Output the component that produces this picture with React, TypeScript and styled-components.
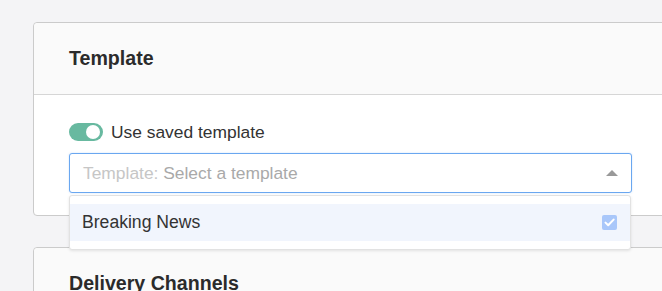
import styled, { createGlobalStyle } from "styled-components";

const GlobalStyle = createGlobalStyle`
  html, body {
    margin: 0;
    padding: 0;
    background: #f4f4f6;
    overflow: hidden;
  }
  body {
    font-family: "Liberation Sans", Arial, sans-serif;
    color: #333;
  }
`;

const Page = styled.main`
  display: flex;
  flex-direction: column;
  gap: 31px;
  padding: 22px 0 0 33px;
  width: 700px;
`;

const Card = styled.section`
  position: relative;
  width: 633px;
  background: #fff;
  border: 1px solid #cbcbcb;
  border-radius: 4px;
`;

const CardHeader = styled.header`
  display: flex;
  align-items: center;
  height: 71px;
  padding: 0 35px;
  background: #fafafa;
  border-bottom: ${({ $divider }: { $divider?: boolean }) =>
    $divider ? "1px solid #d6d6d6" : "none"};
  border-radius: 4px 4px 0 0;
`;

const Title = styled.h2`
  margin: 0;
  font-size: 19.6px;
  font-weight: 700;
  color: #2b2b2b;
`;

const CardBody = styled.div`
  position: relative;
  padding: 25px 35px 22px;
`;

const ToggleRow = styled.label`
  display: flex;
  align-items: center;
  gap: 8px;
  height: 24px;
  font-size: 17.4px;
  color: #333;
`;

const Switch = styled.span`
  position: relative;
  width: 34px;
  height: 18px;
  border-radius: 9px;
  background: #68b9a0;

  &::after {
    content: "";
    position: absolute;
    top: 2px;
    right: 3px;
    width: 14px;
    height: 14px;
    border-radius: 50%;
    background: #fff;
  }
`;

const Select = styled.div`
  display: flex;
  align-items: center;
  justify-content: space-between;
  margin-top: 9px;
  height: 38px;
  padding: 0 13px;
  border: 1px solid #6aa7f0;
  border-radius: 3px;
  background: #fff;
  box-shadow: 0 0 2px rgba(106, 167, 240, 0.35);
  font-size: 17.4px;
`;

const Placeholder = styled.span`
  color: #a9a9a9;

  & > em {
    font-style: normal;
    color: #c6c6c6;
  }
`;

const Caret = styled.span`
  width: 0;
  height: 0;
  border-left: 6px solid transparent;
  border-right: 6px solid transparent;
  border-bottom: 6px solid #999;
`;

const Menu = styled.ul`
  position: absolute;
  z-index: 2;
  left: 35px;
  top: 100px;
  width: 560px;
  margin: 0;
  padding: 8px 0 8px;
  list-style: none;
  background: #fff;
  border: 1px solid #e2e2e2;
  border-radius: 3px;
  box-shadow: 0 1px 3px rgba(0, 0, 0, 0.1);
`;

const Option = styled.li`
  display: flex;
  align-items: center;
  justify-content: space-between;
  height: 37px;
  padding: 0 13px 0 12px;
  font-size: 17.6px;
  color: #333;
  background: ${({ $active }: { $active?: boolean }) =>
    $active ? "#f1f5fd" : "transparent"};
`;

const Check = styled.span`
  display: flex;
  align-items: center;
  justify-content: center;
  width: 15px;
  height: 15px;
  border-radius: 2px;
  background: #a9c7fa;
`;

function App() {
  return (
    <>
      <GlobalStyle />
      <Page>
        <Card>
          <CardHeader $divider>
            <Title>Template</Title>
          </CardHeader>
          <CardBody>
            <ToggleRow>
              <Switch />
              Use saved template
            </ToggleRow>
            <Select>
              <Placeholder>
                <em>Template:</em> Select a template
              </Placeholder>
              <Caret />
            </Select>
            <Menu>
              <Option $active>
                Breaking News
                <Check>
                  <svg width="11" height="9" viewBox="0 0 11 9">
                    <path
                      d="M1.5 4.6l2.7 2.7L9.6 1.6"
                      fill="none"
                      stroke="#fff"
                      strokeWidth="2"
                      strokeLinecap="round"
                      strokeLinejoin="round"
                    />
                  </svg>
                </Check>
              </Option>
            </Menu>
          </CardBody>
        </Card>
        <Card>
          <CardHeader>
            <Title>Delivery Channels</Title>
          </CardHeader>
        </Card>
      </Page>
    </>
  );
}

export default App;
